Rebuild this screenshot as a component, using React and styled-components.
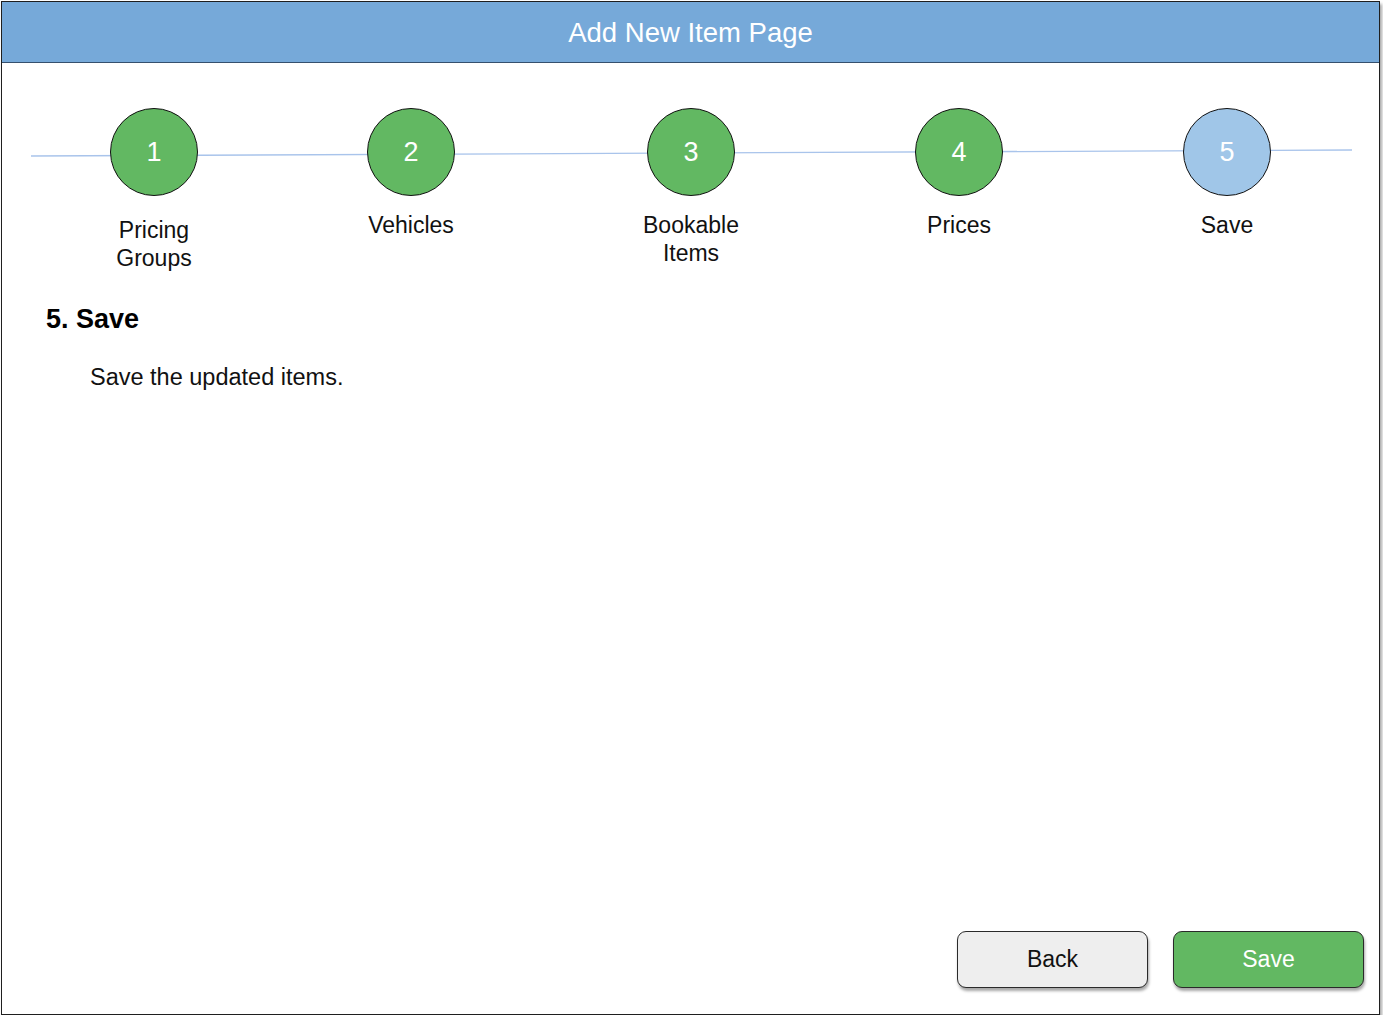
import React from "react";
import styled, { createGlobalStyle } from "styled-components";

const GlobalStyle = createGlobalStyle`
  html, body {
    margin: 0;
    padding: 0;
    background: #ffffff;
    font-family: "Liberation Sans", Arial, sans-serif;
  }
`;

const Frame = styled.div`
  box-sizing: border-box;
  margin: 1px 0 0 1px;
  width: 1379px;
  height: 1014px;
  border: 1px solid #1f1f1f;
  background: #ffffff;
  box-shadow: 2px 3px 3px rgba(0, 0, 0, 0.35);
  display: flex;
  flex-direction: column;
`;

const Header = styled.header`
  height: 61px;
  flex: none;
  background: #76a9d9;
  border-bottom: 1px solid #35506e;
  display: flex;
  align-items: center;
  justify-content: center;
  color: #ffffff;
  font-size: 27.5px;
  padding-top: 1px;
  box-sizing: border-box;
`;

const Stepper = styled.div`
  position: relative;
  display: flex;
  padding-top: 45px;
  height: 239px;
  box-sizing: border-box;
`;

const Track = styled.svg`
  position: absolute;
  left: 0;
  top: 0;
  width: 100%;
  height: 200px;
  pointer-events: none;
`;

const Step = styled.div`
  position: relative;
  width: 176px;
  margin-left: ${p => p.$offset}px;
  display: flex;
  flex-direction: column;
  align-items: center;
`;

const Circle = styled.div`
  width: 88px;
  height: 88px;
  box-sizing: border-box;
  border-radius: 50%;
  border: 1.5px solid #111111;
  background: ${p => (p.$current ? "#a0c6e8" : "#62b862")};
  color: #ffffff;
  font-size: 27px;
  display: flex;
  align-items: center;
  justify-content: center;
`;

const Label = styled.div`
  margin-top: ${p => p.$drop + 15}px;
  font-size: 23px;
  line-height: 28px;
  color: #111111;
  text-align: center;
`;

const Main = styled.main`
  flex: 1;
  padding: 0 44px;
`;

const Title = styled.h2`
  margin: 0;
  font-size: 27px;
  font-weight: bold;
  color: #000000;
  line-height: 34px;
`;

const Description = styled.p`
  margin: 27px 0 0 44px;
  font-size: 23.5px;
  line-height: 28px;
  color: #111111;
`;

const Footer = styled.footer`
  display: flex;
  justify-content: flex-end;
  gap: 25px;
  padding: 0 15px 26px 0;
`;

const Button = styled.button`
  width: 191px;
  height: 57px;
  box-sizing: border-box;
  border: 1.5px solid #2a2a2a;
  border-radius: 9px;
  background: ${p => (p.$primary ? "#62b862" : "#eeeeee")};
  color: ${p => (p.$primary ? "#ffffff" : "#111111")};
  font-family: "Liberation Sans", Arial, sans-serif;
  font-size: 23px;
  box-shadow: 1px 3px 3px rgba(0, 0, 0, 0.35);
  cursor: pointer;
`;

const steps = [
  { n: 1, label: ["Pricing", "Groups"], offset: 64, drop: 5 },
  { n: 2, label: ["Vehicles"], offset: 81, drop: 0 },
  { n: 3, label: ["Bookable", "Items"], offset: 104, drop: 0 },
  { n: 4, label: ["Prices"], offset: 92, drop: 0 },
  { n: 5, label: ["Save"], offset: 92, drop: 0, current: true },
];

export default function App() {
  return (
    <>
      <GlobalStyle />
      <Frame>
        <Header>Add New Item Page</Header>
        <Stepper>
          <Track viewBox="0 0 1377 200" preserveAspectRatio="none">
            <line x1="29" y1="93" x2="1350" y2="87" stroke="#a9c4eb" strokeWidth="1.3" />
          </Track>
          {steps.map(s => (
            <Step key={s.n} $offset={s.offset}>
              <Circle $current={s.current}>{s.n}</Circle>
              <Label $drop={s.drop}>
                {s.label.map(l => (
                  <div key={l}>{l}</div>
                ))}
              </Label>
            </Step>
          ))}
        </Stepper>
        <Main>
          <Title>5. Save</Title>
          <Description>Save the updated items.</Description>
        </Main>
        <Footer>
          <Button>Back</Button>
          <Button $primary>Save</Button>
        </Footer>
      </Frame>
    </>
  );
}
